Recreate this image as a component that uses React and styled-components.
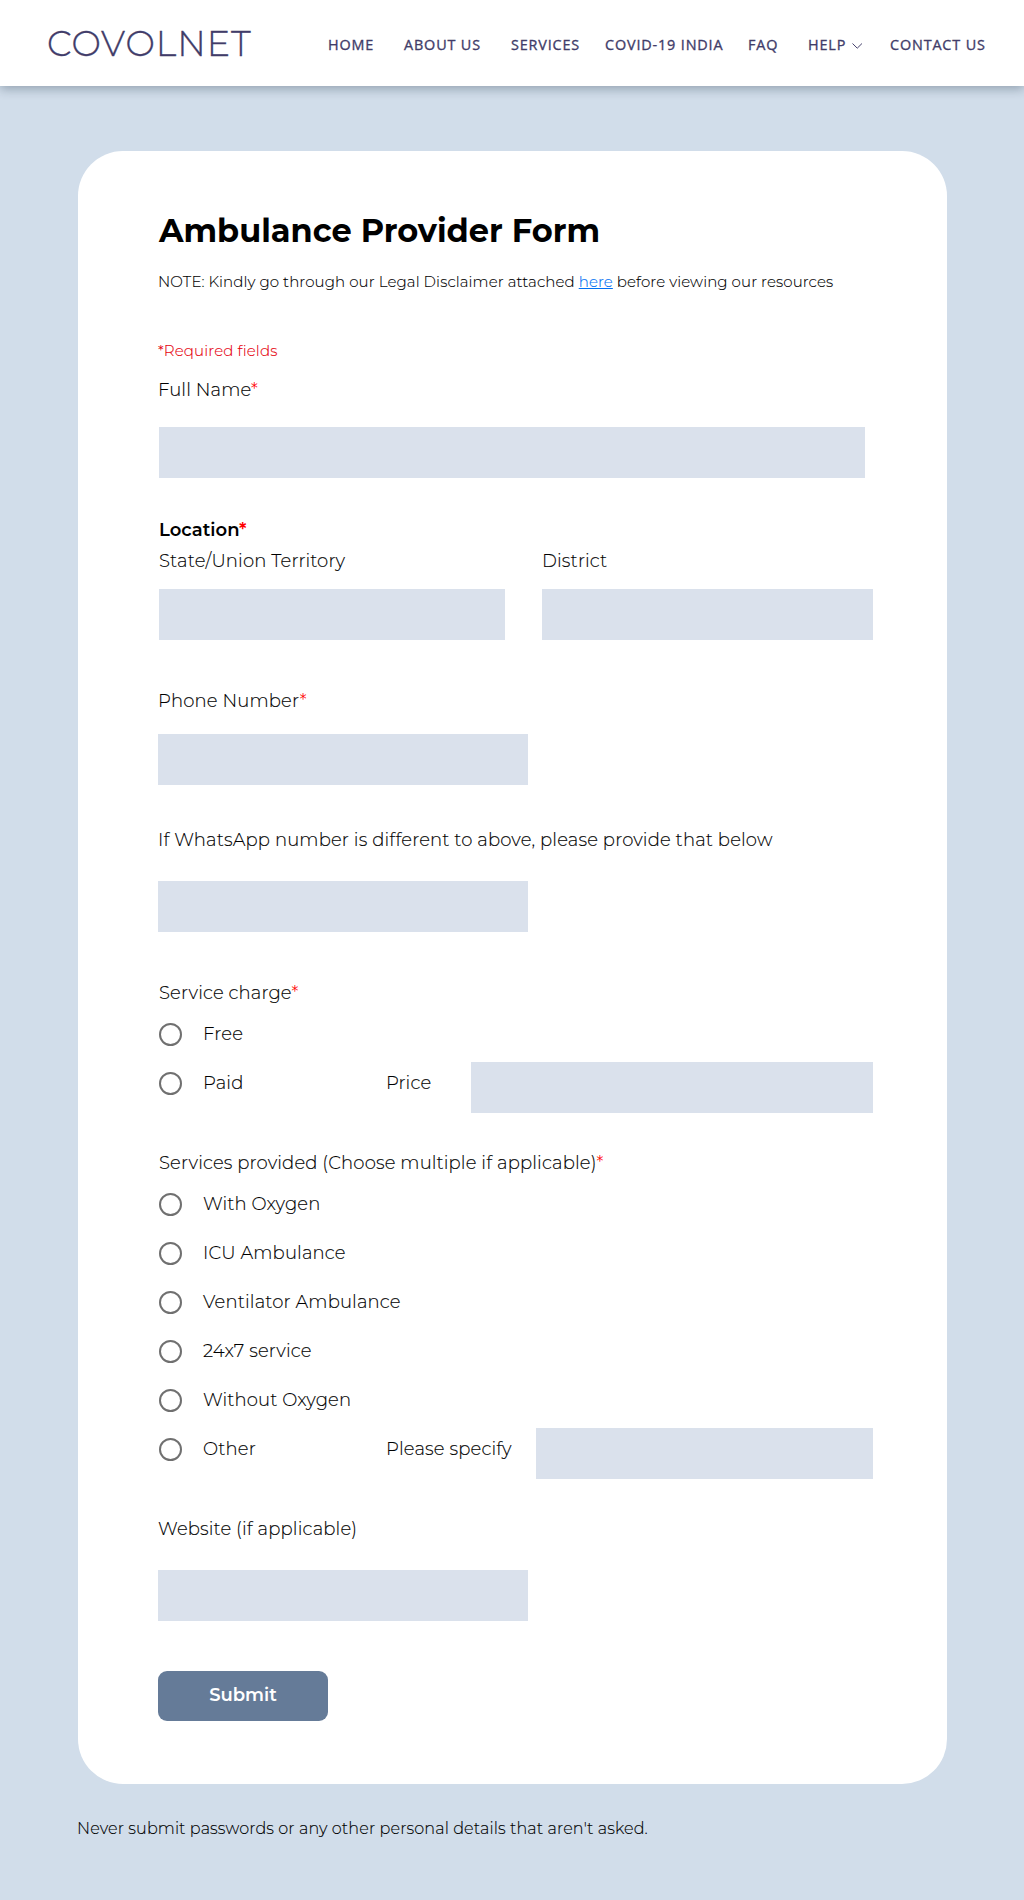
import React from "react";
import styled, { createGlobalStyle } from "styled-components";

const GlobalStyle = createGlobalStyle`
  *, *::before, *::after { box-sizing: border-box; }
  body {
    margin: 0;
    background: #d1ddea;
    color: #000;
    font-family: Montserrat, Lato, "Open Sans", sans-serif;
    font-weight: 300;
  }
`;

const Page = styled.div`
  min-height: 1900px;
  background: #d1ddea;
`;

const Header = styled.header`
  display: flex;
  height: 86px;
  padding-left: 47px;
  background: #fff;
  box-shadow: 0 3px 10px rgba(20, 40, 60, 0.32);
`;

const Logo = styled.div`
  width: 281px;
  padding-top: 23px;
  color: #413c69;
  font-size: 35px;
  font-weight: 300;
  line-height: 42px;
  letter-spacing: 1px;
  white-space: nowrap;
  -webkit-text-stroke: 0.3px currentColor;
`;

const Nav = styled.nav`
  display: grid;
  grid-template-columns: 76px 107px 94px 143px 60px 82px auto;
  padding-top: 34px;
`;

const NavLink = styled.a`
  display: flex;
  color: #413c69;
  font-family: "Open Sans", sans-serif;
  font-size: 15.2px;
  font-weight: 500;
  line-height: 21px;
  letter-spacing: 0.9px;
  white-space: nowrap;
  transform: scaleX(0.947);
  transform-origin: left center;
  -webkit-text-stroke: 0.35px currentColor;
`;

const Chevron = styled.svg`
  width: 12px;
  height: 6px;
  margin: 9px 0 0 6px;
`;

const Card = styled.form`
  display: flex;
  flex-direction: column;
  align-items: flex-start;
  width: 869px;
  height: 1633px;
  margin: 65px 0 0 78px;
  padding: 60px 0 0 80px;
  border-radius: 45px;
  background: #fff;
`;

const Title = styled.h1`
  margin: 0 0 0 1px;
  font-size: 32px;
  font-weight: 700;
  line-height: 40px;
  white-space: nowrap;
`;

const Note = styled.p`
  margin: ${(p) => p.$top}px 0 0;
  color: ${(p) => (p.$alert ? "#e6000c" : "#000")};
  font-size: 15px;
  line-height: 20px;
  letter-spacing: ${(p) => (p.$alert ? 0.15 : 0.1)}px;
  white-space: nowrap;
  -webkit-text-stroke: 0.12px currentColor;

  a {
    color: #0070f3;
    text-decoration: underline;
  }
`;

const Label = styled.label`
  display: block;
  margin: ${(p) => p.$top ?? 0}px 0 0 ${(p) => p.$left ?? 0}px;
  font-size: 18px;
  font-weight: ${(p) => (p.$strong ? 600 : 300)};
  line-height: 24px;
  letter-spacing: ${(p) => (p.$strong ? 0 : 0.14)}px;
  white-space: nowrap;
  -webkit-text-stroke: ${(p) => (p.$strong ? 0 : 0.12)}px currentColor;
`;

const Star = styled.span`
  color: #f00;
`;

const Input = styled.input`
  display: block;
  width: ${(p) => p.$width}px;
  height: 51px;
  margin: ${(p) => p.$top ?? 0}px 0 0 ${(p) => p.$left ?? 0}px;
  padding: 0 12px;
  border: 0;
  border-radius: 0;
  background: #dae1ec;
  font: inherit;
`;

const LocationGrid = styled.div`
  display: grid;
  grid-template-columns: 346px 331px;
  column-gap: 37px;
  margin: 7px 0 0 1px;
`;

const Options = styled.div`
  display: flex;
  flex-direction: column;
  margin: 5px 0 0 1px;
`;

const OptionRow = styled.div`
  display: grid;
  grid-template-columns: 23px 162px auto;
  column-gap: 21px;
  align-items: start;
  min-height: 49px;
`;

const Radio = styled.input`
  appearance: none;
  width: 23px;
  height: 23px;
  margin: 13px 0 0;
  border: 2px solid #707070;
  border-radius: 50%;
  background: #fff;
`;

const Extra = styled.div`
  display: flex;
  align-items: flex-start;
`;

const ExtraLabel = styled(Label)`
  width: ${(p) => p.$width}px;
`;

const Submit = styled.button`
  width: 170px;
  height: 50px;
  margin-top: 50px;
  padding: 0 0 2px;
  border: 0;
  border-radius: 9px;
  background: #657b98;
  color: #fff;
  font-family: inherit;
  font-size: 18px;
  font-weight: 600;
`;

const Warning = styled.p`
  margin: 33px 0 0 77px;
  font-size: 16px;
  line-height: 24px;
  letter-spacing: 0.12px;
  white-space: nowrap;
  -webkit-text-stroke: 0.12px currentColor;
`;

const services = [
  "With Oxygen",
  "ICU Ambulance",
  "Ventilator Ambulance",
  "24x7 service",
  "Without Oxygen",
];

function Option({ name, text, children }) {
  return (
    <OptionRow>
      <Radio type="radio" name={name} />
      <Label $top={12}>{text}</Label>
      {children}
    </OptionRow>
  );
}

export default function App() {
  return (
    <Page>
      <GlobalStyle />
      <Header>
        <Logo>COVOLNET</Logo>
        <Nav>
          <NavLink>HOME</NavLink>
          <NavLink>ABOUT US</NavLink>
          <NavLink>SERVICES</NavLink>
          <NavLink>COVID-19 INDIA</NavLink>
          <NavLink>FAQ</NavLink>
          <NavLink>
            HELP
            <Chevron viewBox="0 0 11 6" fill="none" stroke="#413c69">
              <path d="M0.5 0.5 L5.5 5.2 L10.5 0.5" />
            </Chevron>
          </NavLink>
          <NavLink>CONTACT US</NavLink>
        </Nav>
      </Header>
      <Card>
        <Title>Ambulance Provider Form</Title>
        <Note $top={21}>
          NOTE: Kindly go through our Legal Disclaimer attached <a>here</a> before viewing our resources
        </Note>
        <Note $top={49} $alert>*Required fields</Note>
        <Label $top={17}>Full Name<Star>*</Star></Label>
        <Input $width={706} $top={25} $left={1} />
        <Label $top={40} $left={1} $strong>Location<Star>*</Star></Label>
        <LocationGrid>
          <Label>State/Union Territory</Label>
          <Label>District</Label>
          <Input $width={346} $top={16} />
          <Input $width={331} $top={16} />
        </LocationGrid>
        <Label $top={49}>Phone Number<Star>*</Star></Label>
        <Input $width={370} $top={21} />
        <Label $top={43}>If WhatsApp number is different to above, please provide that below</Label>
        <Input $width={370} $top={29} />
        <Label $top={49} $left={1}>Service charge<Star>*</Star></Label>
        <Options>
          <Option name="charge" text="Free" />
          <Option name="charge" text="Paid">
            <Extra>
              <ExtraLabel $top={12} $width={85}>Price</ExtraLabel>
              <Input $width={402} $top={3} />
            </Extra>
          </Option>
        </Options>
        <Label $top={38} $left={1}>Services provided (Choose multiple if applicable)<Star>*</Star></Label>
        <Options>
          {services.map((text) => (
            <Option key={text} name={text} text={text} />
          ))}
          <Option name="other" text="Other">
            <Extra>
              <ExtraLabel $top={12} $width={150}>Please specify</ExtraLabel>
              <Input $width={337} $top={3} />
            </Extra>
          </Option>
        </Options>
        <Label $top={38}>Website (if applicable)</Label>
        <Input $width={370} $top={29} />
        <Submit type="button">Submit</Submit>
      </Card>
      <Warning>Never submit passwords or any other personal details that aren't asked.</Warning>
    </Page>
  );
}
